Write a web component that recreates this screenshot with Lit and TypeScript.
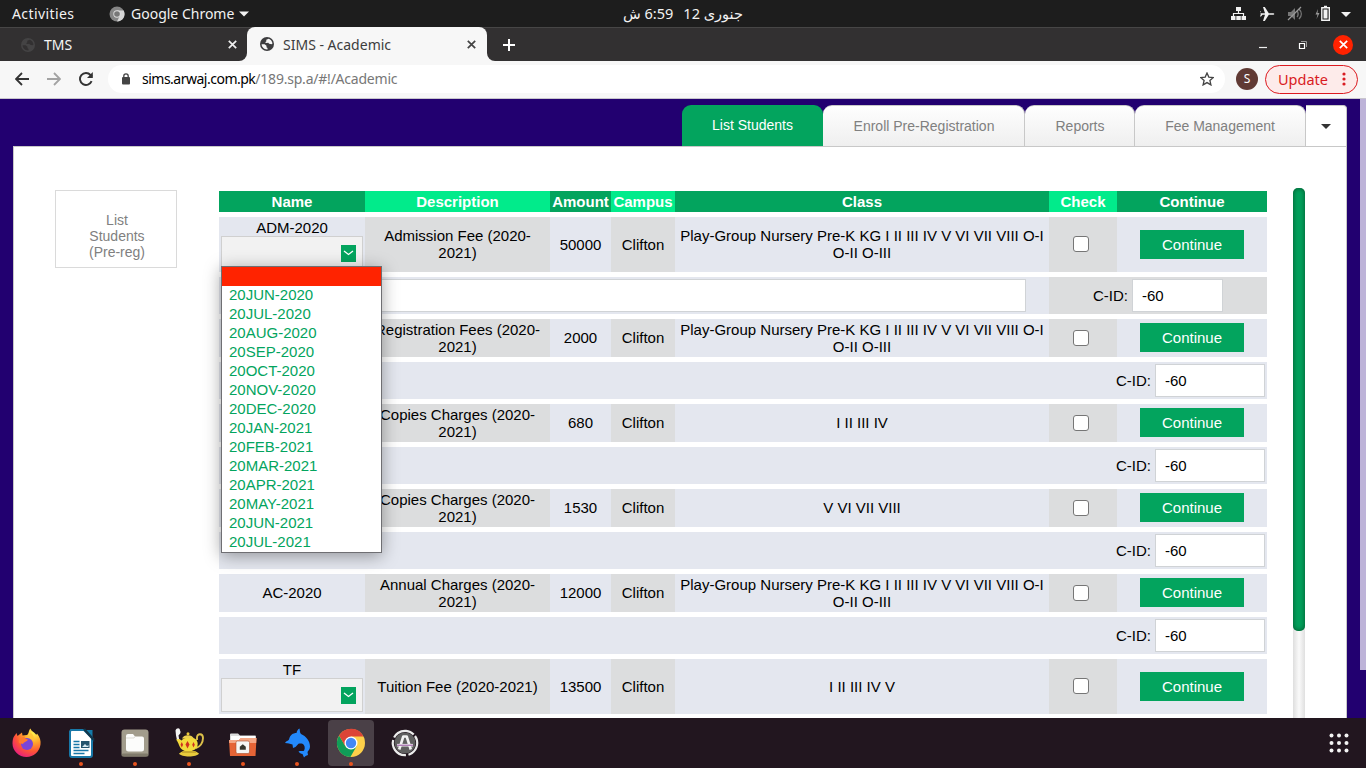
import { LitElement, html, css, svg, nothing } from "lit";
import { customElement, property } from "lit/decorators.js";

interface Fee {
  name: string;
  select?: boolean;
  desc: string;
  amount: string;
  cls: string;
  note?: "wide" | "plain";
}

const LONG = "Play-Group Nursery Pre-K KG I II III IV V VI VII VIII O-I O-II O-III";
const FEES: Fee[] = [
  { name: "ADM-2020", select: true, desc: "Admission Fee (2020-2021)", amount: "50000", cls: LONG, note: "wide" },
  { name: "", desc: "Registration Fees (2020-2021)", amount: "2000", cls: LONG, note: "plain" },
  { name: "", desc: "Copies Charges (2020-2021)", amount: "680", cls: "I II III IV", note: "plain" },
  { name: "", desc: "Copies Charges (2020-2021)", amount: "1530", cls: "V VI VII VIII", note: "plain" },
  { name: "AC-2020", desc: "Annual Charges (2020-2021)", amount: "12000", cls: LONG, note: "plain" },
  { name: "TF", select: true, desc: "Tuition Fee (2020-2021)", amount: "13500", cls: "I II III IV V" },
];
const MONTHS = ["", "20JUN-2020", "20JUL-2020", "20AUG-2020", "20SEP-2020", "20OCT-2020", "20NOV-2020", "20DEC-2020",
  "20JAN-2021", "20FEB-2021", "20MAR-2021", "20APR-2021", "20MAY-2021", "20JUN-2021", "20JUL-2021"];

const globe = (fg: string, bg: string) => html`<svg width="14" height="14" viewBox="0 0 14 14">
  <circle cx="7" cy="7" r="7" fill=${fg}></circle>
  <path d="M1.6 7.2h3l1.9 1.5v1.5l1 .9v1.3C4 12.600 1.700 10 1.600 7.200zM6.300 2.800l2.400-1c2 .7 3.500 2.600 3.800 4.600l-.9.9-2.500-.5-.8-1-2.200.3-1-.9 1.200-.8z" fill=${bg}></path></svg>`;
const cross = (c: string, s = 9) => html`<svg width=${s} height=${s} viewBox="0 0 9 9"><path d="M.8.8l7.400 7.400M8.200.8L.8 8.200" stroke=${c} stroke-width="1.700"></path></svg>`;

const ICONS = {
  firefox: svg`<defs><radialGradient id="ff" cx=".75" cy=".15" r="1"><stop offset="0" stop-color="#fff44f"/><stop offset=".35" stop-color="#ffa62b"/><stop offset=".65" stop-color="#ff5436"/><stop offset="1" stop-color="#e3148b"/></radialGradient></defs>
    <path d="M3 9.500L5.500 6l1 3L11 5.500l.5 3L16 8c2-1 1.500-5 3.500-6.500C20 4 23 5 25 7.500c1 0 1-.5 1-1 3 4 4 7 3.500 11C28.500 25 22.500 30 15.500 30 8 30 1.500 24 1.500 16.500 1.500 13.500 2 11 3 9.500z" fill="url(#ff)"/>
    <circle cx="16" cy="17" r="6" fill="#7a45d8"/><path d="M8 16c-1-3 2-6 6-6.500-1 2 0 2.500 3 3-1 2.500-4 2-5 4.500z" fill="#ff7a2e"/><path d="M16 10.500c3-1 7 1 7.500 5 0-4-1-8-4-10l-1.500 4z" fill="#ffc537"/>`,
  writer: svg`<path d="M6 3h13l8 8v17a2 2 0 0 1-2 2H7a2 2 0 0 1-2-2V4.500z" fill="#fff" stroke="#1878a8" stroke-width="2"/><path d="M20 3h7.500v8z" fill="#147ba9"/><path d="M19 2l9 10v-1" stroke="#12374b" stroke-width="2.500" fill="none"/>
    <path d="M8.500 14.500h6M8.500 17.500h6M8.500 20.500h6M8.500 23.500h15M8.500 26.500h11" stroke="#1977a8" stroke-width="1.400"/><rect x="16" y="14" width="8.500" height="7" fill="#25556e"/><path d="M17 20l3-3 2 2 1.500-1v2z" fill="#d8ebf3"/>`,
  files: svg`<rect x="2.500" y="2.500" width="27" height="27" rx="3" fill="#a29c8c"/><rect x="2.500" y="26.500" width="27" height="3" rx="1.500" fill="#807a6b"/><path d="M7 9a2 2 0 0 1 2-2h5l2 2.500h7a2 2 0 0 1 2 2V22a2.500 2.500 0 0 1-2.500 2.500h-13A2.500 2.500 0 0 1 7 22z" fill="#fcfcfb"/><path d="M7 11h8l1-1.500" stroke="#dddbd6" fill="none"/>`,
  lamp: svg`<path d="M2.500 3.500c1-3 4.500-3 4.500 0 1.500 2-.5 4-1.500 5l.8 4.500H4l-1-4.500z" fill="#f5f5f5"/><path d="M23 21c4-1 7-5 7-10 0-5-6-5-6-.5v2.500" fill="none" stroke="#dcc04a" stroke-width="1.900"/><path d="M3 12.500l3.500-.5 2 1.500C11 10 20 9.500 23.500 13c2 3 1.500 7-1.500 9.500-4 2.500-10 2.500-13 0-3-2.500-3-6.500-6-10z" fill="#f3da3c"/><path d="M9 11.500c1.500-4.500 10-4.500 12 0z" fill="#ecd04e"/><circle cx="15" cy="6.800" r="1.500" fill="#eecb3a"/><path d="M10 24h12l4 2.500c-2 4-18 4-20 0z" fill="#e8cb3d"/><path d="M9 25h14" stroke="#a98820"/><path d="M14.500 14l2 3.500-2 4-2-4zM8.800 15l1.300 2.700-1.300 2.800-1.300-2.800zM20.500 15l1.300 2.700-1.300 2.800-1.300-2.800z" fill="#cf3120"/>`,
  shot: svg`<path d="M3 7.500a1 1 0 0 1 1-1h7l2 2h15a1 1 0 0 1 1 1v8H3z" fill="#dcdcdc"/><rect x="4" y="9" width="24" height="4.500" fill="#fff"/><path d="M2 13h10l2-2h15.500l-1 18H3z" fill="#e56436"/><path d="M2 13h10l2-2h15.500l-.3 5H2.200z" fill="#f4a684"/><rect x="9" y="14" width="13.500" height="12.500" rx="1.500" fill="#f6f6f4" stroke="#a84d2b" stroke-width=".6"/><path d="M12.800 22.800v-3l3-2.500 3 2.500v3z" fill="#36362d"/>`,
  dolphin: svg`<path d="M4 16c1-2 3-2 4-3.500C9 8 12 6 15.500 6c.5-2 1-3.500 3-4.500.5 1.500 0 4 1.500 5.500 5 2 9 7 9 12.500 0 2.500-1.500 4-2.500 5.500l.5 3c-2 .5-3 1.500-4 2.500l-1.500-3.500c-1.500 0-3-1-4-2.500 2-1 4 0 5.500-.8 1.500-3 .5-5-1-6.700-1.500-.5-3-.5-4.500-.3L14.500 20l-2.500 1-.5-3.500C9 17 7 16 4 16z" fill="#2389fb"/>`,
  chrome: svg`<circle cx="16" cy="16" r="14" fill="#fdd04a"/><path d="M4.100 8.500l6.300 10.800L16 22l5.600-2.700L15.400 30A14 14 0 0 1 4.100 8.500z" fill="#109d58"/><path d="M4.100 8.500A14 14 0 0 1 28.500 9.500H16l-5.600 9.800z" fill="#dc4437"/><circle cx="16" cy="16" r="6.500" fill="#fff"/><circle cx="16" cy="16" r="5.200" fill="#4387f5"/>`,
  updater: svg`<circle cx="16" cy="16" r="10.500" fill="#5f5f5f"/><circle cx="16" cy="16" r="12.200" fill="none" stroke="#ececec" stroke-width="2.200" stroke-dasharray="23 2.550" transform="rotate(-35 16 16)"/><path d="M10.200 22.500L14.300 9.500h3.400l4.100 13" fill="none" stroke="#f2f2f2" stroke-width="2.600" stroke-linejoin="round"/><path d="M8 18.200h16" stroke="#f4f4f4" stroke-width="2.600"/><path d="M8 18.200h16" stroke="#924a9c" stroke-width="1"/>`,
};

@customElement("fee-select")
class FeeSelect extends LitElement {
  @property({ type: Boolean }) open = false;
  static styles = css`
    :host { display: block; position: relative; }
    .box { box-sizing: border-box; height: 34px; border: 1px solid #d0d0d0; background: #f2f2f2; display: flex; align-items: center; justify-content: flex-end; padding: 0 6px; }
    .arrow { width: 15px; height: 17px; background: #03a45e; display: flex; align-items: center; justify-content: center; }
    .menu { position: absolute; z-index: 5; top: 30px; left: 0; width: 159px; border: 1px solid #6f6f73; background: #fff; box-shadow: 0 3px 16px rgba(0,0,0,.36); color: #03a45e; text-align: left; }
    .opt { height: 19px; line-height: 17px; padding-left: 7px; }
    .hot { background: #ff2300; }
  `;
  render() {
    return html`<div class="box"><span class="arrow"><svg width="11" height="6" viewBox="0 0 11 6"><path d="M1 1l4.500 3.500L10 1" fill="none" stroke="#fff" stroke-width="1.300"/></svg></span></div>
      ${this.open ? html`<div class="menu">${MONTHS.map((m) => html`<div class="opt ${m ? "" : "hot"}">${m}</div>`)}</div>` : nothing}`;
  }
}

@customElement("fee-table")
class FeeTable extends LitElement {
  static styles = css`
    :host { display: block; width: 1048px; font: 15px/17px "Liberation Sans", Arial, sans-serif; color: #000; }
    .table { display: flex; flex-direction: column; gap: 5px; }
    .row { display: grid; grid-template-columns: 146px 185px 61px 64px 374px 68px 150px; min-height: 38px; background: #e4e7ef; }
    .tall { min-height: 55px; }
    .cell { display: flex; align-items: center; justify-content: center; text-align: center; padding: 0 2px 1px; }
    .cell:nth-child(even) { background: #dcddde; }
    .head { min-height: 21px; height: 21px; background: #03a45e; color: #fff; font-weight: bold; }
    .head .cell { padding: 0; }
    .head .cell:nth-child(even) { background: #01eb8b; }
    .name { flex-direction: column; align-items: stretch; }
    .tall .name { padding-bottom: 0; }
    .check { width: 14px; height: 14px; border: 1px solid #767676; border-radius: 3px; background: #fff; margin-right: 4px; }
    .btn { width: 104px; height: 29px; line-height: 30px; background: #03a45e; color: #fff; }
    .sub { height: 37px; display: flex; align-items: center; justify-content: flex-end; background: #e4e7ef; gap: 4px; padding-right: 2px; }
    .field { box-sizing: border-box; width: 110px; height: 33px; border: 1px solid #d0d3d6; background: #fff; padding: 7px 9px; }
    .small { width: 91px; }
    .wide { display: grid; grid-template-columns: 830px 218px; padding: 0; gap: 0; }
    .left { padding-left: 2px; }
    .left .field { width: 805px; }
    .right { background: #dcddde; height: 37px; display: flex; align-items: center; justify-content: flex-end; gap: 4px; padding-right: 44px; }
  `;
  render() {
    return html`<div class="table">
      <div class="row head">${["Name", "Description", "Amount", "Campus", "Class", "Check", "Continue"].map((h) => html`<div class="cell">${h}</div>`)}</div>
      ${FEES.map((f, i) => html`
        <div class="row ${f.select ? "tall" : ""}">
          <div class="cell name"><span>${f.name}</span>${f.select ? html`<fee-select ?open=${i === 0}></fee-select>` : nothing}</div>
          <div class="cell">${f.desc}</div><div class="cell">${f.amount}</div><div class="cell">Clifton</div>
          <div class="cell">${f.cls}</div><div class="cell"><span class="check"></span></div>
          <div class="cell"><span class="btn">Continue</span></div>
        </div>
        ${f.note === "wide" ? html`<div class="sub wide"><div class="left"><div class="field"></div></div><div class="right"><span>C-ID:</span><div class="field small">-60</div></div></div>`
          : f.note ? html`<div class="sub"><span>C-ID:</span><div class="field">-60</div></div>` : nothing}`)}
    </div>`;
  }
}

@customElement("app-root")
class AppRoot extends LitElement {
  static styles = css`
    :host { display: flex; flex-direction: column; width: 1366px; height: 768px; overflow: hidden; font: 14px/17px "Noto Sans", "Noto Sans CJK SC", sans-serif; }
    svg { display: block; flex: none; }
    .top { height: 27px; background: #1d1d1d; color: #f2f2f2; display: grid; grid-template-columns: 1fr auto 1fr; align-items: center; }
    .topl { display: flex; align-items: center; padding-left: 12px; }
    .act { width: 97px; letter-spacing: .4px; }
    .app { margin: 0 5px 0 6px; }
    .clock { direction: rtl; display: flex; gap: 10px; font-size: 14.500px; font-family: "Noto Sans", "DejaVu Sans", sans-serif; }
    .topr { display: flex; justify-content: flex-end; align-items: center; }
    .strip { height: 33px; border-top: 1px solid #474646; background: #323031; display: flex; color: #f5f5f5; }
    .tab { box-sizing: border-box; display: flex; align-items: center; height: 34px; margin-top: -1px; }
    .tab .t { flex: 1; }
    .tms { width: 247px; padding: 0 10px 0 21px; gap: 9px; background: #323031; border-top: 1px solid #474646; border-bottom-right-radius: 8px; }
    .under { background: #f7f7f7; height: 33px; }
    .grow { flex: 1; display: flex; }
    .on { width: 240px; background: #f7f7f7; color: #3d3d3d; border-radius: 8px 8px 0 0; padding: 0 11px 0 13px; gap: 9px; }
    .rest { flex: 1; background: #323031; border-bottom-left-radius: 8px; display: flex; align-items: center; padding-left: 16px; }
    .win { margin-left: auto; display: flex; align-items: center; padding-right: 13px; }
    .close { width: 20px; height: 20px; border-radius: 50%; background: #ff2200; display: flex; align-items: center; justify-content: center; margin-left: 25px; }
    .bar { box-sizing: border-box; height: 38px; background: #f7f7f7; border-bottom: 1px solid #c8c5cd; display: flex; align-items: center; padding: 0 8px 1px 15px; }
    .nav { display: flex; gap: 18px; }
    .omni { width: 1117px; height: 28px; border-radius: 14px; background: #fff; margin-left: 15px; display: flex; align-items: center; padding: 0 11px 0 14px; box-sizing: border-box; color: #777; }
    .url { flex: 1; margin: 0 0 2px 12px; letter-spacing: -.22px; }
    .url b { font-weight: normal; color: #000; letter-spacing: -.5px; }
    .ava { width: 22px; height: 22px; border-radius: 50%; background: #603a34; color: #fff; font-size: 12px; line-height: 22px; text-align: center; margin-left: 11px; }
    .upd { box-sizing: border-box; width: 93px; height: 29px; border: 1px solid #dc1a20; border-radius: 15px; background: #fdebea; color: #d91b22; margin-left: 7px; display: flex; align-items: center; justify-content: space-between; padding: 0 11px 0 12px; font-size: 14.500px; }
    .page { height: 619px; background: #220070; display: flex; overflow: hidden; }
    .inner { width: 1334px; margin-left: 13px; padding-top: 6px; font: 14px/16px "Liberation Sans", Arial, sans-serif; color: #808080; }
    .tabs { display: flex; justify-content: flex-end; height: 41px; }
    .pt { box-sizing: border-box; height: 41px; border-top: 1px solid #c8c8c8; border-right: 1px solid #c8c8c8; background: linear-gradient(#fefefe, #efefef); border-radius: 9px 9px 0 0; line-height: 41px; text-align: center; }
    .green { background: #03a45e; color: #fff; border: 0; width: 141px; }
    .w2 { width: 202px; padding-left: 1px; } .w3 { width: 110px; padding-left: 1px; } .w4 { width: 171px; }
    .more { width: 41px; background: #fff; border-radius: 0 4px 0 0; display: flex; align-items: center; justify-content: center; }
    .panel { height: 580px; box-sizing: border-box; border: 1px solid #c8c8c8; background: #fff; display: flex; align-items: flex-start; padding: 41px 41px 0; }
    .side { box-sizing: border-box; width: 122px; height: 78px; border: 1px solid #dadada; margin: 2px 42px 0 0; padding: 21px 29px 0 31px; text-align: center; }
    .tbl { margin-top: 3px; }
    .track { width: 12px; height: 560px; margin-left: 26px; background: linear-gradient(90deg, #dedede, #fafafa 50%, #e0e0e0); border-radius: 6px; }
    .thumb { height: 443px; border-radius: 5px; background: #03a05c; box-shadow: inset 0 0 5px rgba(0,50,20,.7); }
    .os { width: 6px; height: 571px; margin-left: auto; background: #bdb3d8; }
    .dock { height: 50px; background: #22161f; display: flex; align-items: center; padding-right: 17px; }
    .di { width: 46px; height: 46px; margin-left: 4px; margin-right: 4px; border-radius: 4px; position: relative; display: flex; align-items: center; justify-content: center; }
    .sel { background: #4a4047; }
    .dot { position: absolute; left: 21px; top: 42px; width: 4px; height: 4px; border-radius: 50%; background: #e95420; }
    .grid { margin-left: auto; }
  `;
  render() {
    return html`
      <div class="top">
        <div class="topl"><span class="act">Activities</span>
          <svg width="16" height="16" viewBox="0 0 16 16"><circle cx="8" cy="8" r="7.500" fill="#858585"/><path d="M8 4.500h6.700A7.500 7.500 0 0 1 8 15.500l3-6z" fill="#d6d6d6"/><circle cx="8" cy="8" r="3.700" fill="#ddd"/><circle cx="8" cy="8" r="2.800" fill="#777"/></svg>
          <span class="app">Google Chrome</span><svg width="10" height="6" viewBox="0 0 10 6"><path d="M0 .5h10L5 5.500z" fill="#f2f2f2"/></svg></div>
        <div class="clock"><span>جنوری 12</span><span>6:59 ش</span></div>
        <div class="topr">
          <svg width="135" height="18" viewBox="1231 4 135 18"><g fill="#f2f2f2">
            <path d="M1236 6h5v4h-5zM1231 15h4.500v4h-4.500zM1241.500 15h4.500v4h-4.500zM1236.300 15h4.500v4h-4.500z"/><path d="M1238.500 9v3.500M1233.500 15v-2.500h10V15" fill="none" stroke="#f2f2f2" stroke-width="1.200"/>
            <path d="M1260 12.200h2.500l2.500.1-2-6.300h1.800l4 6.300h4c2 0 2 1.500 0 1.500h-4l-4 6.300h-1.800l2-6.300h-2.500l-1.500 1.800h-1l.8-2.700-.8-2.700h1z"/>
            <g fill="#777"><path d="M1288 11h3l4-4v12l-4-4h-3z"/><path d="M1297 10c1.500 1.500 1.500 4.500 0 6M1299 8c3 3 3 7 0 10" fill="none" stroke="#777" stroke-width="1.400"/><path d="M1288 19l13-13" stroke="#999" stroke-width="1.300"/></g>
            <path d="M1318 8l-2.500 5.500h2l-1 4.500 3-6h-2z" fill="#999"/><path d="M1321.800 6.700h7.500v12.600h-7.500z" fill="none" stroke="#f2f2f2" stroke-width="1.400"/><path d="M1323.500 8.500h4v9h-4zM1324 4.800h3v1.500h-3z"/><path d="M1341 11h10l-5 5z"/></g></svg>
        </div>
      </div>
      <div class="strip">
        <div class="under"><div class="tab tms">${globe("#444344", "#323031")}<span class="t">TMS</span>${cross("#eee")}</div></div>
        <div class="tab on">${globe("#3d3d3f", "#f7f7f7")}<span class="t">SIMS - Academic</span>${cross("#444")}</div>
        <div class="under grow"><div class="rest"><svg width="12" height="12" viewBox="0 0 12 12"><path d="M6 0v12M0 6h12" stroke="#fff" stroke-width="2"/></svg>
          <div class="win"><svg width="50" height="12" viewBox="0 0 50 12"><path d="M1 8.500h8" stroke="#eee" stroke-width="1.200"/><path d="M41.500 4.500h5v5h-5z" fill="none" stroke="#fff" stroke-width="1.200"/><path d="M43 2.500h5.500V8" fill="none" stroke="#999"/></svg>
            <span class="close">${cross("#fff", 9)}</span></div></div></div>
      </div>
      <div class="bar">
        <div class="nav">
          <svg width="14" height="14" viewBox="0 0 14 14"><path d="M14 7H1.500M7 1L1 7l6 6" fill="none" stroke="#333" stroke-width="1.800"/></svg>
          <svg width="14" height="14" viewBox="0 0 14 14"><path d="M0 7h12.500M7 1l6 6-6 6" fill="none" stroke="#a3a3a3" stroke-width="1.800"/></svg>
          <svg width="14" height="14" viewBox="0 0 14 14"><path d="M12.600 9.200A6 6 0 1 1 11.500 3L13 4.500" fill="none" stroke="#333" stroke-width="1.900"/><path d="M13.800 0v6H8z" fill="#333"/></svg>
        </div>
        <div class="omni"><svg width="8" height="12" viewBox="0 0 8 12"><rect y="4" width="8" height="7.500" rx="1" fill="#444"/><path d="M1.800 5V3a2.200 2.200 0 0 1 4.400 0v2" fill="none" stroke="#444" stroke-width="1.300"/></svg>
          <span class="url"><b>sims.arwaj.com.pk</b>/189.sp.a/#!/Academic</span>
          <svg width="14" height="14" viewBox="0 0 14 14"><path d="M7 1l1.800 4.100 4.500.4-3.400 3 1 4.400L7 10.600l-3.900 2.300 1-4.400-3.400-3 4.500-.4z" fill="none" stroke="#444" stroke-width="1.300"/></svg></div>
        <div class="ava">S</div>
        <div class="upd"><span>Update</span><svg width="4" height="14" viewBox="0 0 4 14"><g fill="#d91b22"><circle cx="2" cy="2" r="1.600"/><circle cx="2" cy="7" r="1.600"/><circle cx="2" cy="12" r="1.600"/></g></svg></div>
      </div>
      <div class="page">
        <div class="inner">
          <div class="tabs"><div class="pt green">List Students</div><div class="pt w2">Enroll Pre-Registration</div><div class="pt w3">Reports</div><div class="pt w4">Fee Management</div>
            <div class="pt more"><svg width="10" height="5" viewBox="0 0 10 5"><path d="M0 0h10L5 5z" fill="#333"/></svg></div></div>
          <div class="panel"><div class="side">List Students (Pre-reg)</div><fee-table class="tbl"></fee-table><div class="track"><div class="thumb"></div></div></div>
        </div>
        <div class="os"></div>
      </div>
      <div class="dock">
        ${Object.entries(ICONS).map(([k, g]) => html`<div class="di ${k === "chrome" ? "sel" : ""}"><svg width="32" height="32" viewBox="0 0 32 32">${g}</svg>${k === "firefox" || k === "updater" ? nothing : html`<span class="dot"></span>`}</div>`)}
        <svg class="grid" width="20" height="20" viewBox="0 0 20 20"><g fill="#f4f4f4">${[2.5, 10, 17.5].map((y) => [2.5, 10, 17.5].map((x) => svg`<circle cx=${x} cy=${y} r="2"/>`))}</g></svg>
      </div>`;
  }
}
